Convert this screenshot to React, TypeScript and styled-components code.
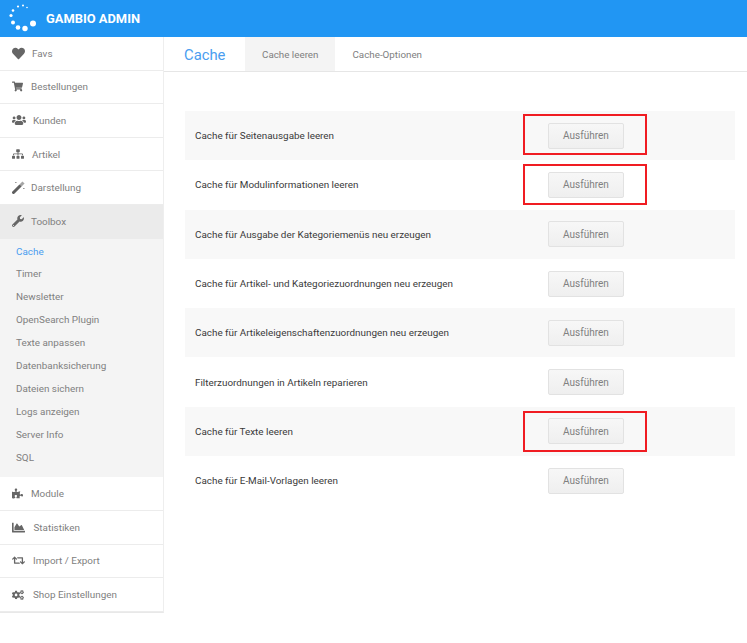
import React from "react";
import styled, { createGlobalStyle } from "styled-components";
import {
  FaChartArea,
  FaCogs,
  FaHeart,
  FaPuzzlePiece,
  FaRetweet,
  FaShoppingCart,
  FaSitemap,
  FaUsers,
  FaWrench,
} from "react-icons/fa";

const GlobalStyle = createGlobalStyle`
  html, body {
    margin: 0;
    padding: 0;
    background: #fff;
    font-family: "Roboto", "Liberation Sans", sans-serif;
  }
`;

const Page = styled.div`
  width: 747px;
  height: 643px;
  overflow: hidden;
  background: #fff;
`;

const Header = styled.header`
  height: 37px;
  background: #2196f3;
  display: flex;
  align-items: center;
  padding-left: 8px;
  box-sizing: border-box;
  gap: 8px;
`;

const Brand = styled.span`
  color: #fff;
  font-size: 12.9px;
  font-weight: 700;
`;

const Layout = styled.div`
  display: flex;
  align-items: flex-start;
`;

const Sidebar = styled.nav`
  width: 164px;
  flex: none;
  box-sizing: border-box;
  border-right: 1px solid #eeeeee;
  border-bottom: 1px solid #e8e8e8;
`;

const NavItem = styled.div<{ $active?: boolean }>`
  height: 33.6px;
  box-sizing: border-box;
  display: flex;
  align-items: center;
  padding-left: 12px;
  color: #808080;
  font-size: 9.9px;
  background: ${(p) => (p.$active ? "#ebebeb" : "#fff")};
  border-bottom: 1px solid ${(p) => (p.$active ? "#ebebeb" : "#ececec")};
`;

const NavIcon = styled.span<{ $slot: number; $size: number }>`
  flex: none;
  width: ${(p) => p.$slot}px;
  display: flex;
  align-items: center;
  color: #666;
  font-size: ${(p) => p.$size}px;
`;

const SubMenu = styled.div`
  background: #f4f4f4;
  padding: 1px 0 9px 16px;
`;

const SubItem = styled.div<{ $active?: boolean }>`
  height: 22.9px;
  display: flex;
  align-items: center;
  font-size: 9.9px;
  color: ${(p) => (p.$active ? "#4a9df0" : "#808080")};
`;

const Main = styled.main`
  flex: 1;
  min-width: 0;
`;

const TabBar = styled.div`
  height: 34px;
  display: flex;
  align-items: stretch;
  border-bottom: 1px solid #e6e6e6;
  padding-left: 20px;
`;

const Title = styled.h1`
  margin: 1px 0 0;
  width: 61px;
  font-size: 14.8px;
  font-weight: 400;
  color: #4a9df0;
  align-self: center;
`;

const Tab = styled.div<{ $active?: boolean }>`
  display: flex;
  align-items: center;
  padding: 0 17px;
  font-size: 9.8px;
  color: #808080;
  background: ${(p) => (p.$active ? "#f4f4f4" : "transparent")};
`;

const Rows = styled.div`
  margin: 39px 12px 0 21px;
`;

const Row = styled.div`
  height: 49.3px;
  display: flex;
  align-items: center;
  padding-left: 10px;
  box-sizing: border-box;
  font-size: 9.9px;
  color: #3a3a3a;

  &:nth-child(odd) {
    background: #f8f8f8;
  }
`;

const Label = styled.span`
  width: 353px;
  flex: none;
`;

const ButtonCell = styled.div`
  position: relative;
  display: flex;
`;

const RunButton = styled.button`
  width: 76px;
  height: 26px;
  padding: 0;
  border: 1px solid #e2e2e2;
  border-radius: 2px;
  background: linear-gradient(#f7f7f7, #efefef);
  font-family: inherit;
  font-size: 10px;
  color: #808080;
`;

const Highlight = styled.span<{ $top: number }>`
  position: absolute;
  left: -25px;
  top: ${(p) => p.$top}px;
  width: 124px;
  height: 41px;
  box-sizing: border-box;
  border: 2px solid #f01c22;
`;

const Logo = () => (
  <svg width="30" height="30" viewBox="0 0 30 30" fill="#fff" style={{ flex: "none" }}>
    <circle cx="25" cy="19.5" r="3" />
    <circle cx="17" cy="24.5" r="2.7" />
    <circle cx="10" cy="23.5" r="2.3" />
    <circle cx="5" cy="18.5" r="2" />
    <circle cx="3" cy="11.5" r="1.6" />
    <circle cx="5" cy="6.5" r="1.3" />
    <circle cx="10" cy="2.5" r="1.1" />
    <circle cx="15" cy="1.5" r="1" />
    <circle cx="19" cy="3.5" r="0.8" />
  </svg>
);

const Wand = () => (
  <svg width="13" height="13" viewBox="0 0 13 13">
    <path d="M1.5 11.5 L8 5" stroke="#5f5f5f" strokeWidth="3" strokeLinecap="round" />
    <path d="M8.5 4.5 L11.5 1.5" stroke="#a5a5a5" strokeWidth="3" />
    <path d="M3 1.5h1.6M11 7.5h1.6" stroke="#999" strokeWidth="1.2" />
  </svg>
);

const topItems = [
  { icon: <FaHeart />, label: "Favs", slot: 20, size: 13 },
  { icon: <FaShoppingCart />, label: "Bestellungen", slot: 19, size: 11 },
  { icon: <FaUsers />, label: "Kunden", slot: 21, size: 14 },
  { icon: <FaSitemap />, label: "Artikel", slot: 20, size: 12 },
  { icon: <Wand />, label: "Darstellung", slot: 19, size: 13 },
];

const subItems = [
  "Cache",
  "Timer",
  "Newsletter",
  "OpenSearch Plugin",
  "Texte anpassen",
  "Datenbanksicherung",
  "Dateien sichern",
  "Logs anzeigen",
  "Server Info",
  "SQL",
];

const bottomItems = [
  { icon: <FaPuzzlePiece />, label: "Module", slot: 19, size: 11 },
  { icon: <FaChartArea />, label: "Statistiken", slot: 21.5, size: 13 },
  { icon: <FaRetweet />, label: "Import / Export", slot: 21, size: 13 },
  { icon: <FaCogs />, label: "Shop Einstellungen", slot: 21, size: 12 },
];

const actions: { label: string; markTop?: number }[] = [
  { label: "Cache für Seitenausgabe leeren", markTop: -9 },
  { label: "Cache für Modulinformationen leeren", markTop: -8 },
  { label: "Cache für Ausgabe der Kategoriemenüs neu erzeugen" },
  { label: "Cache für Artikel- und Kategoriezuordnungen neu erzeugen" },
  { label: "Cache für Artikeleigenschaftenzuordnungen neu erzeugen" },
  { label: "Filterzuordnungen in Artikeln reparieren" },
  { label: "Cache für Texte leeren", markTop: -7 },
  { label: "Cache für E-Mail-Vorlagen leeren" },
];

const App = () => (
  <Page>
    <GlobalStyle />
    <Header>
      <Logo />
      <Brand>GAMBIO ADMIN</Brand>
    </Header>
    <Layout>
      <Sidebar>
        {topItems.map((item) => (
          <NavItem key={item.label}>
            <NavIcon $slot={item.slot} $size={item.size}>
              {item.icon}
            </NavIcon>
            {item.label}
          </NavItem>
        ))}
        <NavItem $active>
          <NavIcon $slot={19} $size={12}>
            <FaWrench />
          </NavIcon>
          Toolbox
        </NavItem>
        <SubMenu>
          {subItems.map((name, i) => (
            <SubItem key={name} $active={i === 0}>
              {name}
            </SubItem>
          ))}
        </SubMenu>
        {bottomItems.map((item) => (
          <NavItem key={item.label}>
            <NavIcon $slot={item.slot} $size={item.size}>
              {item.icon}
            </NavIcon>
            {item.label}
          </NavItem>
        ))}
      </Sidebar>
      <Main>
        <TabBar>
          <Title>Cache</Title>
          <Tab $active>Cache leeren</Tab>
          <Tab>Cache-Optionen</Tab>
        </TabBar>
        <Rows>
          {actions.map((action) => (
            <Row key={action.label}>
              <Label>{action.label}</Label>
              <ButtonCell>
                <RunButton>Ausführen</RunButton>
                {action.markTop !== undefined && <Highlight $top={action.markTop} />}
              </ButtonCell>
            </Row>
          ))}
        </Rows>
      </Main>
    </Layout>
  </Page>
);

export default App;
